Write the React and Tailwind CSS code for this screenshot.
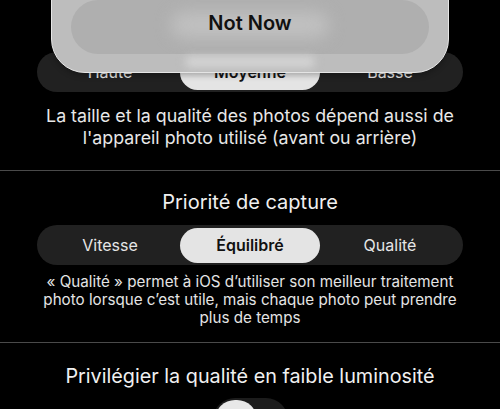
import React from "react";

function Segmented({ items, selected }) {
  return (
    <div className="mx-[37px] h-[40px] rounded-full bg-[#212121] flex items-center px-[3px]">
      {items.map((it, i) => (
        <div
          key={it}
          className={
            "flex-1 h-[35px] rounded-full flex items-center justify-center text-[16px] " +
            (i === selected ? "bg-[#e4e4e4] text-[#111] font-semibold" : "text-[#e6e6e6]")
          }
        >
          {it}
        </div>
      ))}
    </div>
  );
}

export default function App() {
  return (
    <div
      className="relative w-[500px] h-[409px] overflow-hidden bg-black text-[#ececec]"
      style={{ fontFamily: "Inter, 'Noto Sans', sans-serif" }}
    >
      <div className="pt-[52px]">
        <Segmented items={["Haute", "Moyenne", "Basse"]} selected={1} />
        <p className="mt-[13px] text-center text-[17.8px] leading-[22px] text-[#e8e8e8]">
          La taille et la qualité des photos dépend aussi de
          <br />
          l'appareil photo utilisé (avant ou arrière)
        </p>
        <div className="mt-[21px] h-px bg-[#4a4a4a]" />
        <h2 className="mt-[19px] text-center text-[20px] leading-[24px] text-[#f0f0f0]">
          Priorité de capture
        </h2>
        <div className="mt-[11px]">
          <Segmented items={["Vitesse", "Équilibré", "Qualité"]} selected={1} />
        </div>
        <p className="mt-[8px] text-center text-[15.2px] leading-[18px] text-[#e4e4e4] px-[30px]">
          « Qualité » permet à iOS d’utiliser son meilleur traitement
          <br />
          photo lorsque c’est utile, mais chaque photo peut prendre
          <br />
          plus de temps
        </p>
        <div className="mt-[15px] h-px bg-[#4a4a4a]" />
        <h2 className="mt-[21px] text-center text-[19.8px] leading-[24px] text-[#f0f0f0]">
          Privilégier la qualité en faible luminosité
        </h2>
        <div className="mt-[10px] flex justify-center">
          <div className="w-[75px] h-[44px] rounded-full bg-[#1c1c1c] p-[2px]">
            <div className="w-[42px] h-[40px] rounded-full bg-[#e8e8e8]" />
          </div>
        </div>
      </div>

      {/* Popup overlay */}
      <div className="absolute left-[51px] top-[-40px] w-[398px] h-[113px] rounded-[34px] bg-[#bdbdbd] border border-[#e6e6e6] shadow-[0_2px_6px_rgba(0,0,0,0.3)] px-[19px] pt-[39px]">
        <div className="relative h-[54px] rounded-[27px] bg-[#afafaf] flex items-center justify-center overflow-hidden pb-[8px]">
          <div className="absolute left-[100px] right-[100px] top-[12px] h-[26px] rounded-full bg-[#c0c0c0] blur-[8px]" />
          <span className="relative text-[20px] font-semibold text-[#111]">Not Now</span>
        </div>
        <div className="mx-auto mt-[3px] w-[130px] h-[10px] rounded-full bg-[#d6d6d6] blur-[4px]" />
      </div>
    </div>
  );
}
